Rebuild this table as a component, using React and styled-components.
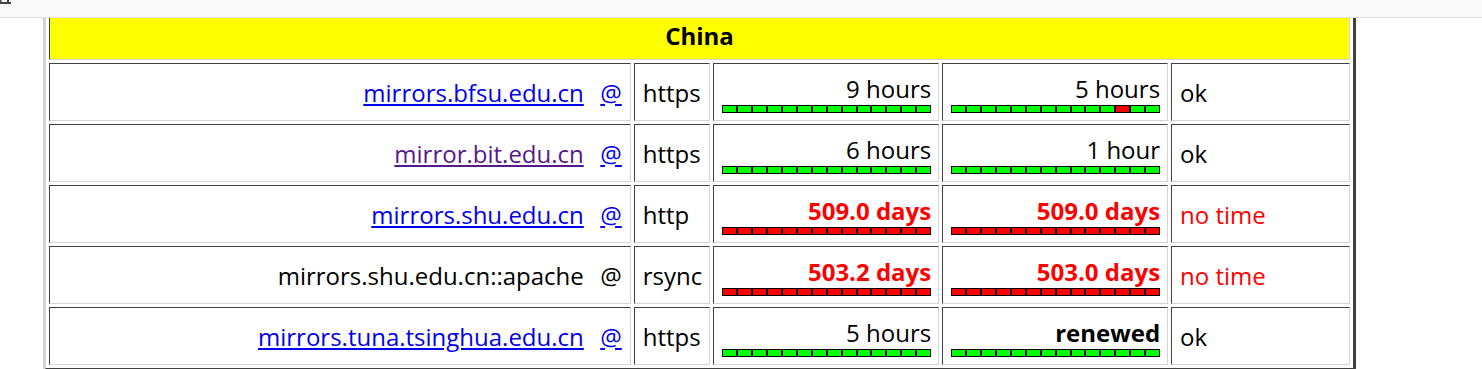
import React from 'react';
import styled, { createGlobalStyle } from 'styled-components';

const GlobalStyle = createGlobalStyle`
    html, body {
        margin: 0;
        padding: 0;
        background: #ffffff;
    }
    body {
        font-family: "Open Sans", "Noto Sans", "DejaVu Sans", sans-serif;
        font-size: 24px;
        color: #000000;
    }
`;

const TopBar = styled.div`
    height: 17px;
    background: #f9f9f9;
    border-bottom: 1px solid #dedede;
    display: flex;
    align-items: flex-start;
`;

const Viewport = styled.div`
    height: 351px;
    overflow: hidden;
`;

const MirrorTable = styled.table`
    margin: -14px 0 0 43px;
    width: 1313px;
    border-collapse: separate;
    border-spacing: 3px;
    border-style: solid;
    border-width: 3px;
    border-color: #d4d4d4 #404040 #404040 #d4d4d4;
    box-sizing: border-box;
    line-height: 33px;
`;

const HeaderCell = styled.th`
    background: #ffff00;
    font-weight: 700;
    text-align: center;
    padding: 7.5px;
    border: 1px solid;
    border-color: #404040 #d4d4d4 #d4d4d4 #404040;
`;

const Cell = styled.td`
    box-sizing: border-box;
    width: ${({ $w }) => $w}px;
    padding: 7.5px 7px 7.5px 8px;
    border: 1px solid;
    border-color: #404040 #d4d4d4 #d4d4d4 #404040;
    text-align: ${({ $align }) => $align || 'left'};
    vertical-align: middle;
    white-space: nowrap;
`;

const HostLink = styled.a`
    color: ${({ $visited }) => ($visited ? '#551a8b' : '#0000ee')};
    text-decoration: underline;
`;

const At = styled.span`
    display: inline-block;
    margin-left: 3px;
    padding: 0 1px;
`;

const AgeText = styled.div`
    text-align: right;
    font-weight: ${({ $tone }) => ($tone === 'plain' ? 400 : 700)};
    color: ${({ $tone }) => ($tone === 'stale' ? '#ff0000' : '#000000')};
`;

const Bar = styled.div`
    display: flex;
    height: 8px;
`;

const Segment = styled.span`
    flex: 1 1 15px;
    box-sizing: border-box;
    height: 8px;
    border: 1px solid #000000;
    background: ${({ $bad }) => ($bad ? '#ff0000' : '#00ff00')};
`;

const Status = styled.span`
    color: ${({ $bad }) => ($bad ? '#ff0000' : '#000000')};
`;

const TinyIcon = () => (
    <svg width="12" height="4" viewBox="0 0 12 4">
        <rect x="0" y="0" width="1.5" height="2" fill="#444" />
        <rect x="7" y="0" width="2" height="2" fill="#444" />
        <rect x="0" y="2" width="11" height="2" fill="#444" />
    </svg>
);

const widths = [582, 76, 226, 226, 179];

const mirrors = [
    { host: 'mirrors.bfsu.edu.cn', linked: true, proto: 'https', last: { text: '9 hours', tone: 'plain' }, check: { text: '5 hours', tone: 'plain', red: [11] }, status: 'ok' },
    { host: 'mirror.bit.edu.cn', linked: true, visited: true, proto: 'https', last: { text: '6 hours', tone: 'plain' }, check: { text: '1 hour', tone: 'plain' }, status: 'ok' },
    { host: 'mirrors.shu.edu.cn', linked: true, proto: 'http', last: { text: '509.0 days', tone: 'stale', all: true }, check: { text: '509.0 days', tone: 'stale', all: true }, status: 'no time', bad: true },
    { host: 'mirrors.shu.edu.cn::apache', linked: false, proto: 'rsync', last: { text: '503.2 days', tone: 'stale', all: true }, check: { text: '503.0 days', tone: 'stale', all: true }, status: 'no time', bad: true },
    { host: 'mirrors.tuna.tsinghua.edu.cn', linked: true, proto: 'https', last: { text: '5 hours', tone: 'plain' }, check: { text: 'renewed', tone: 'renewed' }, status: 'ok' },
];

const AgeCell = ({ age, w }) => (
    <Cell $w={w}>
        <AgeText $tone={age.tone}>{age.text}</AgeText>
        <Bar>
            {Array.from({ length: 14 }).map((_, i) => (
                <Segment key={i} $bad={age.all || (age.red || []).includes(i)} />
            ))}
        </Bar>
    </Cell>
);

export default function App() {
    return (
        <>
            <GlobalStyle />
            <TopBar>
                <TinyIcon />
            </TopBar>
            <Viewport>
                <MirrorTable>
                    <tbody>
                        <tr>
                            <HeaderCell colSpan={5}>China</HeaderCell>
                        </tr>
                        {mirrors.map((m) => (
                            <tr key={m.host}>
                                <Cell $w={widths[0]} $align="right">
                                    {m.linked ? (
                                        <HostLink href="#" $visited={m.visited}>{m.host}</HostLink>
                                    ) : (
                                        m.host
                                    )}
                                    {'\u00a0 '}
                                    <At>{m.linked ? <HostLink href="#">@</HostLink> : '@'}</At>
                                </Cell>
                                <Cell $w={widths[1]}>{m.proto}</Cell>
                                <AgeCell age={m.last} w={widths[2]} />
                                <AgeCell age={m.check} w={widths[3]} />
                                <Cell $w={widths[4]}>
                                    <Status $bad={m.bad}>{m.status}</Status>
                                </Cell>
                            </tr>
                        ))}
                    </tbody>
                </MirrorTable>
            </Viewport>
        </>
    );
}
